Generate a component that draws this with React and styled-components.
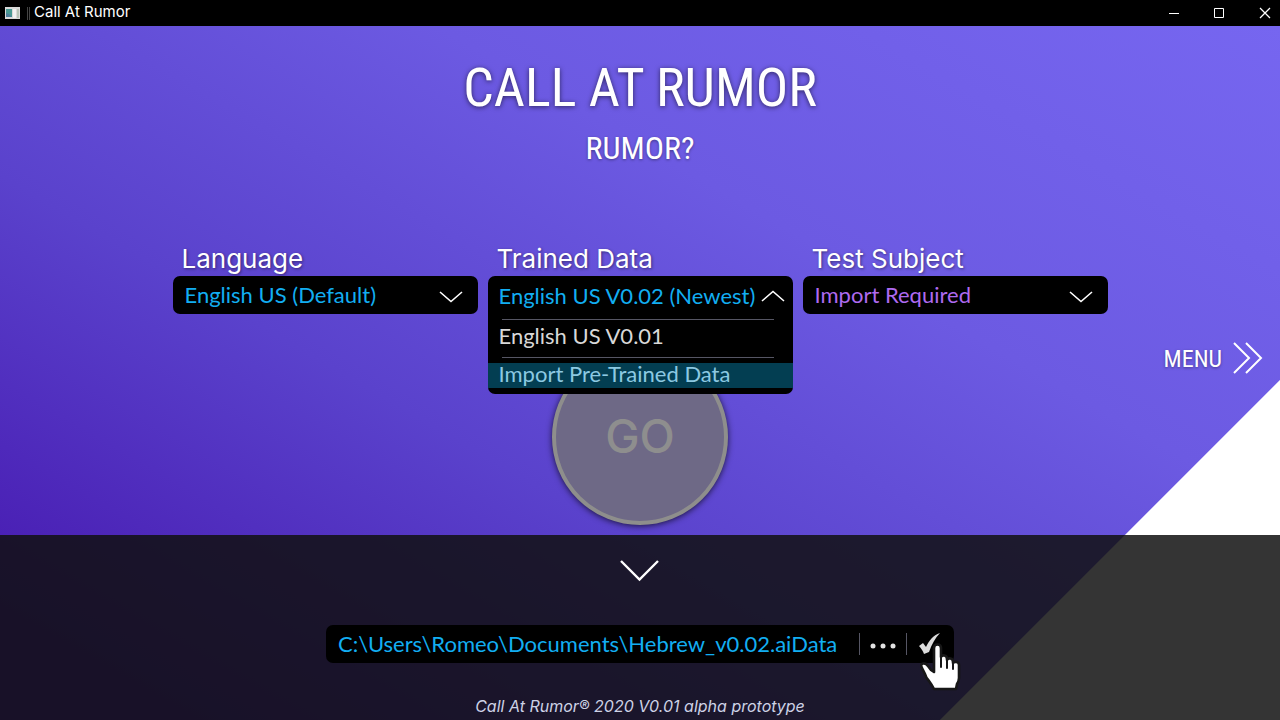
import React from "react";
import styled, { createGlobalStyle } from "styled-components";

const GlobalStyle = createGlobalStyle`
  *, *::before, *::after { box-sizing: border-box; }
  body {
    margin: 0;
    background: #000;
    color: #fff;
    font-family: Inter, "Liberation Sans", sans-serif;
  }
  button, input, select { font: inherit; color: inherit; }
  button {
    padding: 0;
    border: 0;
    background: none;
    cursor: pointer;
  }
`;

const uiFont = `Lato, "Open Sans", sans-serif`;
const condensedFont = `"Roboto Condensed", "Liberation Sans Narrow", "Open Sans Condensed", "DejaVu Sans Condensed", sans-serif`;

const Window = styled.div`
  min-height: 100vh;
  display: flex;
  flex-direction: column;
`;

const TitleBar = styled.header`
  height: 26px;
  display: flex;
  align-items: center;
  gap: 4px;
  padding-left: 5px;
  background: #000;
`;

const WindowTitle = styled.span`
  flex: 1;
  font-size: 15px;
  line-height: 24px;
  padding-bottom: 2px;
`;

const WindowButtons = styled.div`
  display: flex;
  gap: 30px;
  padding-right: 8px;
`;

const WindowButton = styled.button`
  display: flex;
`;

const Stage = styled.div`
  flex: 1;
  display: flex;
  flex-direction: column;
  background:
    linear-gradient(315deg, #fff 240px, transparent 241px),
    linear-gradient(30deg, #4516ae 5%, #5a42cc 38%, #6c5ae2 66%, #7666f0 100%);
`;

const Main = styled.main`
  flex: 1;
  display: flex;
  flex-direction: column;
  padding-top: 24px;
`;

const Heading = styled.h1`
  margin: 0;
  text-align: center;
  font-family: ${condensedFont};
  font-size: 54px;
  font-weight: 400;
  line-height: 76px;
  text-shadow: 0 1px 5px rgba(0, 0, 0, 0.6);
`;

const Subheading = styled.p`
  margin: 0;
  text-align: center;
  font-family: ${condensedFont};
  font-size: 32px;
  line-height: 44px;
  text-shadow: 0 1px 3px rgba(0, 0, 0, 0.4);
`;

const Fields = styled.div`
  display: flex;
  justify-content: center;
  gap: 10px;
  margin-top: 72px;
`;

const Field = styled.div`
  position: relative;
  width: 305px;
  display: flex;
  flex-direction: column;
`;

const FieldLabel = styled.label`
  padding-left: 9px;
  font-size: 26px;
  line-height: 34px;
  text-shadow: 1px 1px 3px rgba(0, 0, 0, 0.45);
`;

const SelectBox = styled.div`
  display: grid;
  align-items: center;
  height: 38px;
  border-radius: 7px;
  background: #000;

  > * { grid-area: 1 / 1; }
  > svg { justify-self: end; margin: 4px 15px 0 0; pointer-events: none; }
`;

const Select = styled.select`
  appearance: none;
  width: 100%;
  height: 38px;
  padding: 0 40px 2px 12px;
  border: 0;
  border-radius: 7px;
  background: transparent;
  color: ${(p) => p.$color};
  font-family: ${uiFont};
  font-size: 22px;
`;

const Menu = styled.div`
  position: absolute;
  top: 34px;
  left: 0;
  right: 0;
  z-index: 2;
  padding-bottom: 6px;
  border-radius: 7px;
  background: #000;
  font-family: ${uiFont};
  font-size: 22px;
`;

const MenuToggle = styled.button`
  width: 100%;
  height: 43px;
  display: flex;
  align-items: center;
  justify-content: space-between;
  padding: 0 8px 4px 11px;
  color: #12aef2;
  white-space: nowrap;
`;

const Options = styled.ul`
  margin: 0;
  padding: 0;
  list-style: none;
`;

const Option = styled.li`
  padding: 0 0 4px 11px;
  line-height: 21px;
  color: ${(p) => (p.$active ? "#8cc9e2" : "#d8d8d8")};
  background: ${(p) => (p.$active ? "#033e52" : "transparent")};
`;

const Rule = styled.li`
  height: 1px;
  margin: ${(p) => (p.$first ? "0 19px 5px 14px" : "7px 19px 5px 14px")};
  background: #565664;
`;

const ActionRow = styled.div`
  display: grid;
  grid-template-columns: 1fr auto 1fr;
  align-items: start;
  margin-top: 28px;
`;

const GoButton = styled.button`
  grid-column: 2;
  width: 176px;
  height: 176px;
  margin: 7px 0 10px;
  padding-bottom: 2px;
  border: 4px solid #8e8e8c;
  border-radius: 50%;
  background: #6e6986;
  color: #8e8e8e;
  font-size: 46px;
  font-weight: 500;
  box-shadow: 0 1px 6px rgba(0, 0, 0, 0.7);
`;

const MenuLink = styled.button`
  grid-column: 3;
  justify-self: end;
  display: flex;
  align-items: center;
  gap: 10px;
  margin-right: 16px;
  font-family: ${condensedFont};
  font-size: 24px;
  line-height: 34px;
  text-shadow: 0 1px 3px rgba(0, 0, 0, 0.4);
`;

const Drawer = styled.section`
  display: flex;
  flex-direction: column;
  align-items: center;
  height: 185px;
  padding-top: 23px;
  background: rgba(16, 16, 16, 0.85);
`;

const CollapseButton = styled.button`
  display: flex;
`;

const PathBar = styled.form`
  width: 628px;
  max-width: 100%;
  height: 38px;
  display: flex;
  align-items: center;
  margin-top: 43px;
  border-radius: 7px;
  background: #000;
`;

const PathInput = styled.input`
  flex: 1;
  min-width: 0;
  height: 38px;
  padding: 0 0 2px 12px;
  border: 0;
  outline: 0;
  background: transparent;
  color: #12aef2;
  font-family: ${uiFont};
  font-size: 22px;
`;

const PathButton = styled.button`
  position: relative;
  width: ${(p) => (p.type === "submit" ? 48 : 47)}px;
  height: 22px;
  display: flex;
  align-items: center;
  justify-content: center;
  border-left: 1px solid #565664;
`;

const Pointer = styled.svg`
  position: absolute;
  top: 10px;
  left: 13px;
  z-index: 3;
`;

const Footer = styled.footer`
  margin-top: auto;
  padding-bottom: 4px;
  font-size: 16px;
  font-style: italic;
  line-height: 20px;
  color: #cdd2e6;
`;

const Chevron = ({ up }) => (
  <svg width="24" height="12" viewBox="0 0 24 12" fill="none" stroke="#fff" strokeWidth="1.6" aria-hidden="true">
    <path d={up ? "M1 11 12 1.5 23 11" : "M1 1 12 10.5 23 1"} />
  </svg>
);

export default function App() {
  return (
    <>
      <GlobalStyle />
      <Window>
        <TitleBar>
          <svg width="25" height="14" viewBox="0 0 25 14" aria-hidden="true">
            <rect x="0" y="1" width="15" height="12" fill="#d9d9d9" />
            <rect x="1" y="3" width="6" height="8" fill="#4a9a94" />
            <path d="M1 11V7l3 1 3 3z" fill="#4d7f9a" />
            <rect x="8" y="3" width="3" height="9" fill="#f1f1f1" />
            <rect x="12" y="3" width="2" height="9" fill="#b8c4b8" />
            <path d="M22.500 1V14M24.500 1V14" stroke="#444" />
          </svg>
          <WindowTitle>Call At Rumor</WindowTitle>
          <WindowButtons>
            <WindowButton aria-label="Minimize">
              <svg width="15" height="14" viewBox="0 0 15 14"><path d="M2 7.500H12" stroke="#fff" /></svg>
            </WindowButton>
            <WindowButton aria-label="Maximize">
              <svg width="15" height="14" viewBox="0 0 15 14"><path d="M2.500 2.500h9v9h-9z" fill="none" stroke="#fff" /></svg>
            </WindowButton>
            <WindowButton aria-label="Close">
              <svg width="15" height="14" viewBox="0 0 15 14"><path d="M3 2l10 10M13 2 3 12" stroke="#fff" strokeWidth="1.300" /></svg>
            </WindowButton>
          </WindowButtons>
        </TitleBar>

        <Stage>
          <Main>
            <Heading>CALL AT RUMOR</Heading>
            <Subheading>RUMOR?</Subheading>

            <Fields>
              <Field>
                <FieldLabel htmlFor="language">Language</FieldLabel>
                <SelectBox>
                  <Select id="language" $color="#12aef2">
                    <option>English US (Default)</option>
                  </Select>
                  <Chevron />
                </SelectBox>
              </Field>

              <Field>
                <FieldLabel htmlFor="trained-data">Trained Data</FieldLabel>
                <Menu>
                  <MenuToggle id="trained-data" aria-haspopup="listbox" aria-expanded="true">
                    English US V0.02 (Newest)
                    <Chevron up />
                  </MenuToggle>
                  <Options role="listbox" aria-label="Trained Data">
                    <Rule role="presentation" $first />
                    <Option role="option">English US V0.01</Option>
                    <Rule role="presentation" />
                    <Option role="option" aria-selected="true" $active>Import Pre-Trained Data</Option>
                  </Options>
                </Menu>
              </Field>

              <Field>
                <FieldLabel htmlFor="test-subject">Test Subject</FieldLabel>
                <SelectBox>
                  <Select id="test-subject" $color="#ae6af0">
                    <option>Import Required</option>
                  </Select>
                  <Chevron />
                </SelectBox>
              </Field>
            </Fields>

            <ActionRow>
              <GoButton>GO</GoButton>
              <MenuLink>
                MENU
                <svg width="32" height="34" viewBox="0 0 32 34" fill="none" stroke="#fff" strokeWidth="2" aria-hidden="true">
                  <path d="M2 1l15 15L2 31M14 1l15 15-15 15" />
                </svg>
              </MenuLink>
            </ActionRow>
          </Main>

          <Drawer>
            <CollapseButton aria-label="Collapse">
              <svg width="40" height="24" viewBox="0 0 40 24" fill="none" stroke="#fff" strokeWidth="2.400">
                <path d="M1 3l18.500 18.500L38 3" />
              </svg>
            </CollapseButton>
            <PathBar onSubmit={(e) => e.preventDefault()}>
              <PathInput aria-label="Data path" defaultValue={"C:\\Users\\Romeo\\Documents\\Hebrew_v0.02.aiData"} />
              <PathButton type="button" aria-label="Browse">
                <svg width="26" height="10" viewBox="0 0 26 10" fill="#e2e2e2">
                  <circle cx="3" cy="7" r="2.500" />
                  <circle cx="13" cy="7" r="2.500" />
                  <circle cx="23" cy="7" r="2.500" />
                </svg>
              </PathButton>
              <PathButton type="submit" aria-label="Confirm">
                <svg width="24" height="24" viewBox="0 0 24 24" fill="#dcdcdc">
                  <path d="M0 14l4-3 3 4C10 9 14 3 21 1c-5 5-8 11-11 19l-5 2c-1-3-3-6-5-8z" />
                </svg>
                <Pointer width="42" height="50" viewBox="0 0 42 50" aria-hidden="true">
                  <path
                    d="M14 29V5q0-3.500 3.500-3.500T21 5v9q1-2 3.500-1.500T27 16v1q1-2 3.500-1.500T33 19v1q1-1.500 3.500-1T39 22v13q0 3-2 6l-1 5H14q-2-4-5-8-3-3-4-7L2 25q-2-4 1-4.500 3-.5 5 2.500l3 4z"
                    fill="#fff"
                    stroke="#171717"
                    strokeWidth="2.600"
                    strokeLinejoin="round"
                  />
                  <path d="M21 13v11M27 17v8M33 20v6" stroke="#171717" strokeWidth="2" strokeLinecap="round" />
                </Pointer>
              </PathButton>
            </PathBar>
            <Footer>Call At Rumor® 2020 V0.01 alpha prototype</Footer>
          </Drawer>
        </Stage>
      </Window>
    </>
  );
}
